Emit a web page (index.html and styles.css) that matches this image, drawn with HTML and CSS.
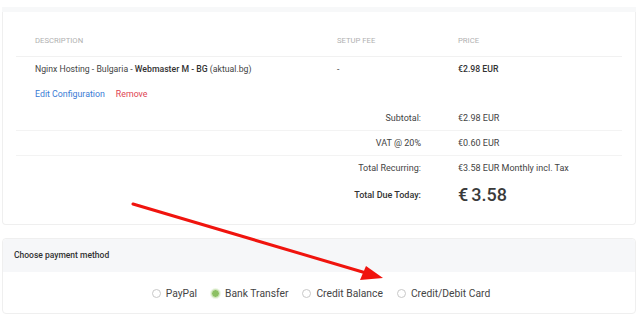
FILE: index.html
```html
<!DOCTYPE html>
<html>
<head>
<meta charset="utf-8">
<link rel="stylesheet" href="styles.css">
</head>
<body>
<div class="strip"></div>
<div class="card summary">
  <div class="row head">
    <div class="c1">Description</div>
    <div class="c2">Setup Fee</div>
    <div class="c3">Price</div>
  </div>
  <div class="row item">
    <div class="c1">
      <div>Nginx Hosting - Bulgaria - <b>Webmaster M - BG</b> (aktual.bg)</div>
      <div class="actions"><a class="edit">Edit Configuration</a><a class="remove">Remove</a></div>
    </div>
    <div class="c2">-</div>
    <div class="c3"><b>€2.98 EUR</b></div>
  </div>
  <div class="row sub line">
    <div class="label">Subtotal:</div>
    <div class="c3">€2.98 EUR</div>
  </div>
  <div class="row sub line">
    <div class="label">VAT @ 20%</div>
    <div class="c3">€0.60 EUR</div>
  </div>
  <div class="row sub">
    <div class="label">Total Recurring:</div>
    <div class="c3">€3.58 EUR Monthly incl. Tax</div>
  </div>
  <div class="row due">
    <div class="label strong">Total Due Today:</div>
    <div class="c3 big">€<span class="sp"></span>3.58</div>
  </div>
</div>
<div class="card pay">
  <div class="pay-head">Choose payment method</div>
  <div class="pay-body">
    <label class="opt"><span class="radio"></span>PayPal</label>
    <label class="opt"><span class="radio on"></span>Bank Transfer</label>
    <label class="opt"><span class="radio"></span>Credit Balance</label>
    <label class="opt"><span class="radio"></span>Credit/Debit Card</label>
  </div>
</div>
<svg class="arrow" width="640" height="318" viewBox="0 0 640 318">
  <line x1="133" y1="204" x2="366" y2="273" stroke="#f0140e" stroke-width="3" stroke-linecap="round"/>
  <polygon points="383,278 360,280 366,266" fill="#f0140e"/>
</svg>
</body>
</html>
```
FILE: styles.css
```css
html, body {
  margin: 0;
  padding: 0;
  background: #fff;
}
body {
  font-family: "Roboto", "Noto Sans", sans-serif;
  color: #444;
  font-size: 8.7px;
  position: relative;
  width: 640px;
  height: 318px;
  overflow: hidden;
}
.strip {
  margin: 7px 4px 0 2px;
  height: 5px;
  background: #f7f8f9;
}
.card {
  margin: 0 4px 0 2px;
  border: 1px solid #efefef;
  border-top: none;
  border-radius: 0 0 4px 4px;
  background: #fff;
}
.summary {
  padding: 0 13px 14px 13px;
}
.row {
  display: grid;
  grid-template-columns: 302px 121px 1fr;
  align-items: center;
}
.row > div {
  padding-left: 19px;
}
.head {
  padding: 23px 0 9px;
  line-height: 12px;
  font-size: 7.7px;
  text-transform: uppercase;
  color: #b0b0b0;
  border-bottom: 1px solid #f1f1f1;
}
.item {
  padding: 5px 0 5px;
  line-height: 14px;
  align-items: start;
}
.item b, .c3 b { font-weight: 500; color: #333; }
.actions {
  margin-top: 11px;
  font-size: 8.8px;
}
.actions a { margin-right: 11px; }
.edit { color: #3a7bd5; }
.remove { color: #e04452; }
.sub {
  height: 24px;
  line-height: 14px;
  font-size: 9px;
}
.line { border-bottom: 1px solid #f3f3f3; }
.row .label {
  grid-column: 1 / 3;
  text-align: right;
  padding-right: 18px;
  padding-left: 0;
}
.sub .c3 { grid-column: 3; }
.due {
  height: 30px;
  font-size: 9px;
}
.strong { font-weight: 500; color: #333; }
.big {
  font-size: 18px;
  font-weight: 500;
  color: #3a3a3a;
  line-height: 24px;
}
.sp { display: inline-block; width: 3px; }
.pay {
  margin-top: 13px;
  border-top: 1px solid #efefef;
  border-radius: 4px;
}
.pay-head {
  height: 33px;
  line-height: 33px;
  background: #f6f7f9;
  padding-left: 11px;
  font-size: 8.5px;
  font-weight: 500;
  color: #333;
  border-radius: 4px 4px 0 0;
}
.pay-body {
  height: 39px;
  padding-top: 2px;
  display: flex;
  justify-content: center;
  align-items: center;
  gap: 14px;
  padding-left: 4px;
  font-size: 10.3px;
  color: #444;
}
.opt {
  display: flex;
  align-items: center;
}
.radio {
  width: 7px;
  height: 7px;
  border: 1px solid #c8c8c8;
  border-radius: 50%;
  margin-right: 5px;
  box-sizing: content-box;
}
.radio.on {
  background: #8cc063;
  border-color: #d8ebc8;
  box-shadow: 0 0 0 1px #eef6e6;
}
.arrow {
  position: absolute;
  left: 0;
  top: 0;
  pointer-events: none;
}
```
